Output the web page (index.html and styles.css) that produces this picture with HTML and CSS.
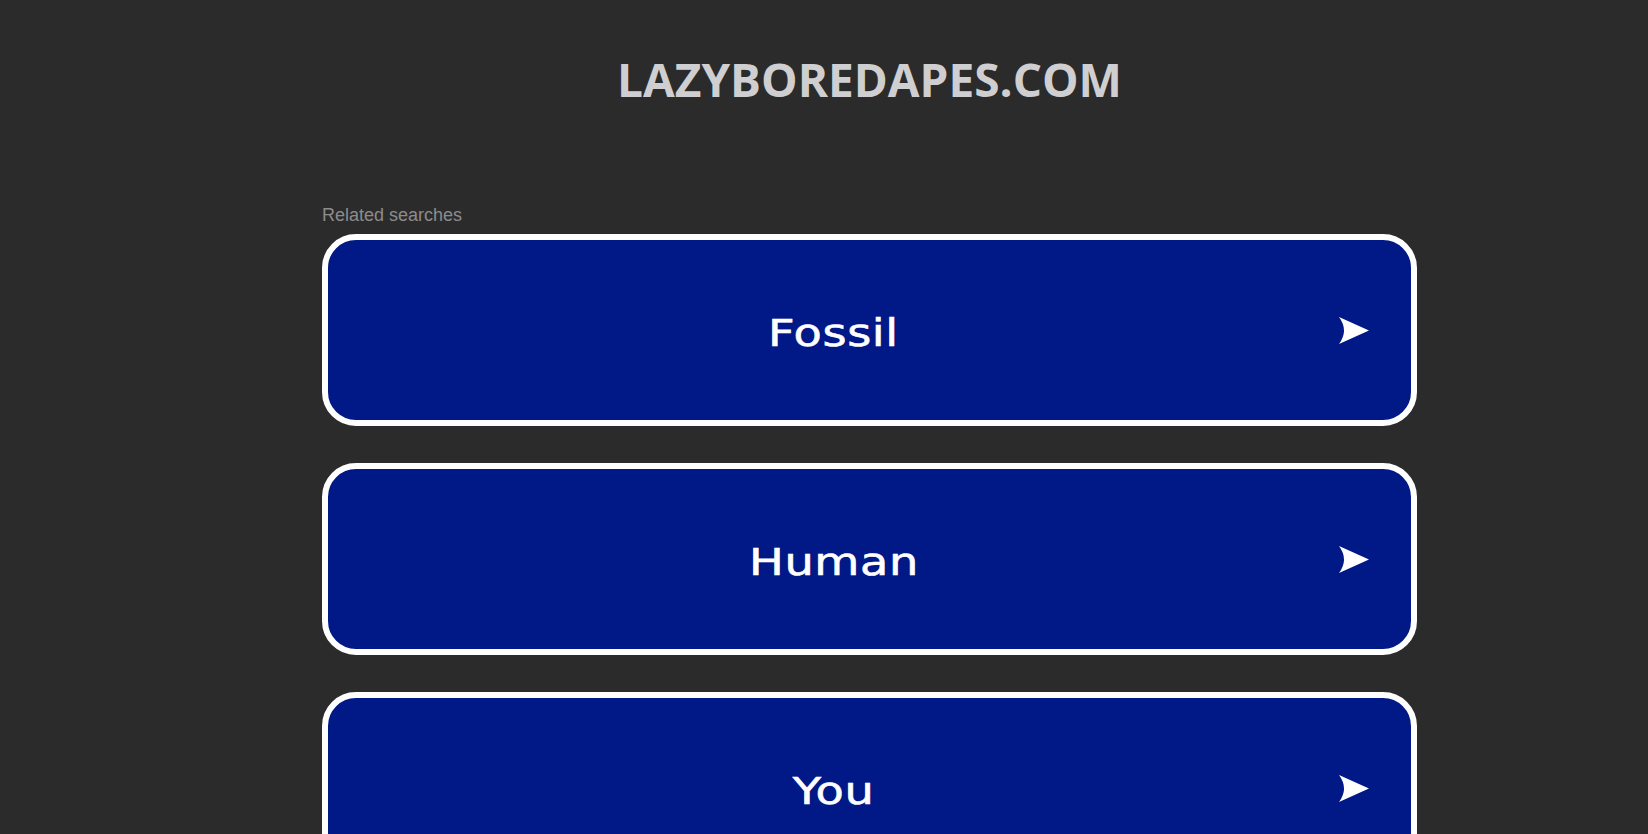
FILE: index.html
```html
<!DOCTYPE html>
<html lang="en">
<head>
<meta charset="utf-8">
<title>lazyboredapes.com</title>
<link rel="stylesheet" href="styles.css">
</head>
<body>
<div class="page">
  <header class="header">
    <h1 class="title">LAZYBOREDAPES.COM</h1>
  </header>
  <main class="related">
    <div class="related-label">Related searches</div>
    <ul class="list">
      <li><a class="item" href="#"><span class="item-text"><span class="wide">Fossil</span></span><svg class="arrow" viewBox="0 0 30 27" width="30" height="27"><path d="M0 0 L30 13.5 L0 27 Q10 13.5 0 0 Z" fill="#fff"/></svg></a></li>
      <li><a class="item" href="#"><span class="item-text"><span class="wide">Human</span></span><svg class="arrow" viewBox="0 0 30 27" width="30" height="27"><path d="M0 0 L30 13.5 L0 27 Q10 13.5 0 0 Z" fill="#fff"/></svg></a></li>
      <li><a class="item" href="#"><span class="item-text"><span class="wide">You</span></span><svg class="arrow" viewBox="0 0 30 27" width="30" height="27"><path d="M0 0 L30 13.5 L0 27 Q10 13.5 0 0 Z" fill="#fff"/></svg></a></li>
    </ul>
  </main>
</div>
</body>
</html>
```
FILE: styles.css
```css
html, body {
  margin: 0;
  padding: 0;
  background: #2b2b2b;
  height: 100%;
  overflow: hidden;
}
.page {
  width: 1095px;
  margin-left: 322px;
}
.header {
  padding-top: 56px;
  text-align: center;
}
.title {
  margin: 0;
  font-family: "Open Sans", "Liberation Sans", sans-serif;
  font-weight: 700;
  font-size: 46px;
  line-height: 46px;
  color: #cfcfd1;
}
.related {
  margin-top: 103px;
}
.related-label {
  font-family: "Liberation Sans", Arial, sans-serif;
  font-size: 18px;
  line-height: 20px;
  color: #8c8c8c;
  margin-bottom: 9px;
}
.list {
  list-style: none;
  margin: 0;
  padding: 0;
  display: flex;
  flex-direction: column;
  gap: 37px;
}
.item {
  box-sizing: border-box;
  height: 192px;
  display: flex;
  align-items: center;
  background: #011887;
  border: 6px solid #ffffff;
  border-radius: 34px;
  text-decoration: none;
  color: #ffffff;
}
.item-text {
  flex: 1;
  text-align: center;
  font-family: "DejaVu Sans", sans-serif;
  font-size: 37px;
  line-height: 40px;
  padding-top: 8px;
  -webkit-text-stroke: 0.6px #ffffff;
  letter-spacing: 0.5px;
}
.wide {
  display: inline-block;
  transform: scaleX(1.25);
}
.arrow {
  flex: none;
  margin-right: 42px;
  display: block;
}
```
